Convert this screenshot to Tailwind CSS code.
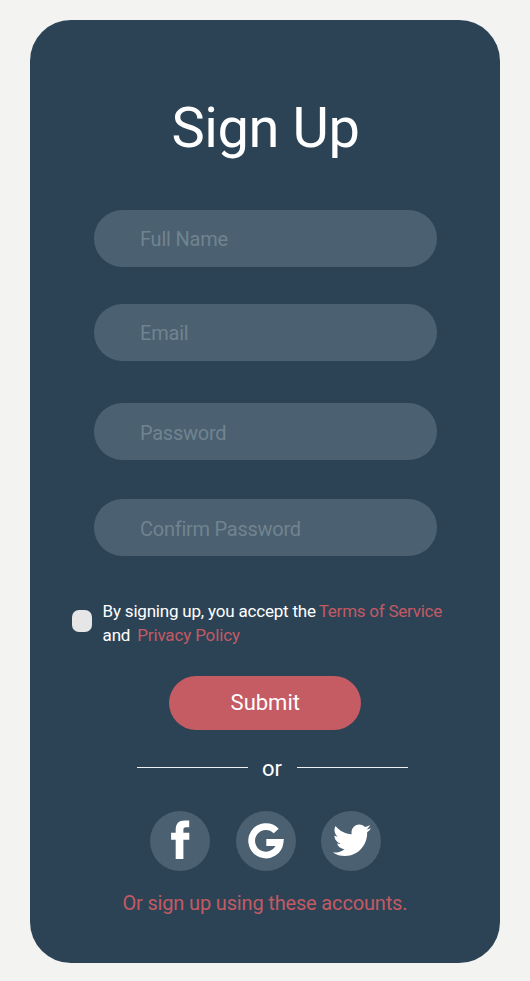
<!DOCTYPE html>
<html lang="en">
<head>
<meta charset="utf-8">
<title>Sign Up</title>
<script src="https://cdn.jsdelivr.net/npm/@tailwindcss/browser@4"></script>
</head>
<body class="w-[530px] h-[981px] overflow-hidden bg-[#f3f3f1] pt-[19.5px] pl-[30.4px] font-['Roboto',sans-serif]">
<main class="w-[469.6px] h-[943.5px] rounded-[41px] bg-[#2c4356] flex flex-col text-white whitespace-nowrap">
  <h1 class="mt-[76px] h-[64px] ml-[141px] text-[56px] leading-[64px] tracking-[-0.4px] font-normal">Sign Up</h1>
  <form class="flex flex-col">
    <div class="ml-[63.6px] mt-[50.5px] w-[343px] h-[57px] rounded-full bg-[#4b6070] pl-[46px] text-[20px] leading-[59px] tracking-[-0.2px] text-[#708490]">Full Name</div>
    <div class="ml-[63.6px] mt-[37.3px] w-[343px] h-[57.2px] rounded-full bg-[#4b6070] pl-[46px] text-[20px] leading-[59px] tracking-[-0.2px] text-[#708490]">Email</div>
    <div class="ml-[63.6px] mt-[41.5px] w-[343px] h-[56.7px] rounded-full bg-[#4b6070] pl-[46px] text-[20px] leading-[61px] tracking-[-0.25px] text-[#708490]">Password</div>
    <div class="ml-[63.6px] mt-[39.3px] w-[343px] h-[57.3px] rounded-full bg-[#4b6070] pl-[46px] text-[20px] leading-[61px] tracking-[-0.25px] text-[#708490]">Confirm Password</div>
    <div class="flex mt-[42.5px] ml-[41.6px] h-[48px]">
      <span class="mt-[11px] w-[20px] h-[22px] rounded-[7px] bg-[#e6e6e6]"></span>
      <div class="ml-[10.6px] text-[17px] leading-[24px] tracking-[-0.2px]">
        <p>By signing up, you accept the<a class="ml-[3px] tracking-[-0.24px] text-[#c35a63]">Terms of Service</a></p>
        <p>and <a class="text-[#c35a63] ml-[3px] tracking-[-0.15px]">Privacy Policy</a></p>
      </div>
    </div>
    <button type="button" class="ml-[138.4px] mt-[29px] w-[192px] h-[54px] rounded-full bg-[#c55b63] pl-px text-[22px] leading-[54px]">Submit</button>
  </form>
  <div class="flex items-center mt-[23px] ml-[106.6px] h-[30px]">
    <span class="w-[111px] h-px bg-[#eef1f3]"></span>
    <span class="w-[49px] pt-[2px] pr-px text-center text-[22px] leading-[30px]">or</span>
    <span class="w-[111px] h-px bg-[#eef1f3]"></span>
  </div>
  <div class="flex mt-[28.2px] ml-[119.6px] gap-[25.7px]">
    <svg class="w-[60px] h-[60px]" viewBox="150 810.5 60 60"><circle cx="180" cy="840.5" r="30" fill="#4b6070"/><path fill="#fff" d="M175.7 858.4V839.3H171.1V832.3H175.7V829.5C175.7 823 178.8 820 184.8 820H189.2V826.7H186.2C184 826.7 183.4 827.6 183.4 829.6V832.3H189.3V839.3H183.4V858.4Z"/></svg>
    <svg class="w-[60px] h-[60px]" viewBox="236 810.5 60 60"><circle cx="266" cy="840.5" r="30" fill="#4b6070"/><path fill="none" stroke="#fff" stroke-width="6.8" d="M276.2 830.5A14.2 14.2 0 1 0 280 842H266.3"/></svg>
    <svg class="w-[60px] h-[60px]" viewBox="321.4 810.5 60 60"><circle cx="351.4" cy="840.5" r="30" fill="#4b6070"/><path fill="#fff" transform="translate(333.3 820.3) scale(1.59 1.62)" d="M24 4.557c-.883.392-1.832.656-2.828.775 1.017-.609 1.798-1.574 2.165-2.724-.951.564-2.005.974-3.127 1.195-.897-.957-2.178-1.555-3.594-1.555-3.179 0-5.515 2.966-4.797 6.045-4.091-.205-7.719-2.165-10.148-5.144-1.29 2.213-.669 5.108 1.523 6.574-.806-.026-1.566-.247-2.229-.616-.054 2.281 1.581 4.415 3.949 4.89-.693.188-1.452.232-2.224.084.626 1.956 2.444 3.379 4.6 3.419-2.07 1.623-4.678 2.348-7.29 2.04 2.179 1.397 4.768 2.212 7.548 2.212 9.142 0 14.307-7.721 13.995-14.646.962-.695 1.797-1.562 2.457-2.549z"/></svg>
  </div>
  <p class="mt-[20px] ml-[92px] text-[20px] leading-[24px] tracking-[-0.16px] text-[#c35a63]">Or sign up using these accounts.</p>
</main>
</body>
</html>
